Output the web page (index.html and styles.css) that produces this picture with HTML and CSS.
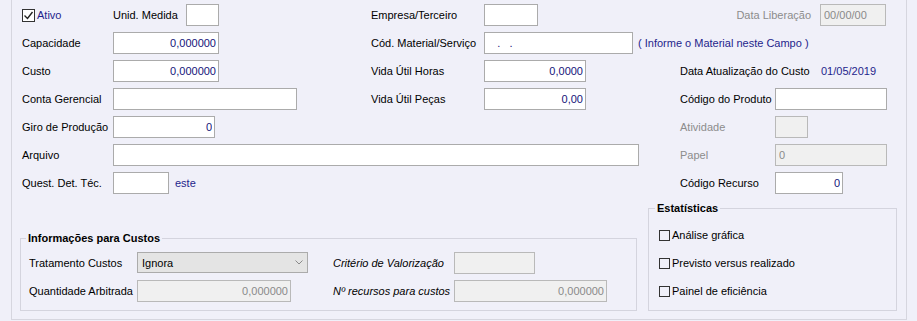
FILE: index.html
```html
<!DOCTYPE html>
<html lang="pt-BR">
<head>
    <meta charset="UTF-8">
    <title>Cadastro de Recurso</title>
    <link rel="stylesheet" href="styles.css">
</head>
<body>
    <div class="panel">
        <div class="form-grid">
            <!-- linha 1 -->
            <label class="check main-check"><span class="box"><svg width="11" height="11" viewBox="0 0 11 11"><polyline points="1.5,5.5 4.5,8.5 9.5,2" fill="none" stroke="#222" stroke-width="1.4"/></svg></span><span class="blue">Ativo</span></label>
            <div class="inline"><span class="lbl-unid">Unid. Medida</span><input class="fld w33" type="text"></div>
            <span>Empresa/Terceiro</span>
            <div><input class="fld w54" type="text"></div>
            <div class="span56 right"><span class="muted">Data Liberação</span><input class="fld w66 off" type="text" value="00/00/00"></div>

            <!-- linha 2 -->
            <span>Capacidade</span>
            <div><input class="fld w106 num" type="text" value="0,000000"></div>
            <span>Cód. Material/Serviço</span>
            <div class="span46 inline"><input class="fld w149 code" type="text" value="   .   ." spellcheck="false"><span class="blue note">( Informe o Material neste Campo )</span></div>

            <!-- linha 3 -->
            <span>Custo</span>
            <div><input class="fld w106 num" type="text" value="0,000000"></div>
            <span>Vida Útil Horas</span>
            <div><input class="fld w102 num" type="text" value="0,0000"></div>
            <div class="span56 inline"><span>Data Atualização do Custo</span><span class="blue date">01/05/2019</span></div>

            <!-- linha 4 -->
            <span>Conta Gerencial</span>
            <div><input class="fld w184" type="text"></div>
            <span>Vida Útil Peças</span>
            <div><input class="fld w102 num" type="text" value="0,00"></div>
            <span>Código do Produto</span>
            <div><input class="fld w112" type="text"></div>

            <!-- linha 5 -->
            <span>Giro de Produção</span>
            <div><input class="fld w102 num" type="text" value="0"></div>
            <span class="muted col5">Atividade</span>
            <div><input class="fld w33 off" type="text"></div>

            <!-- linha 6 -->
            <span>Arquivo</span>
            <div class="span24"><input class="fld w526" type="text"></div>
            <span class="muted">Papel</span>
            <div><input class="fld w112 off" type="text" value="0"></div>

            <!-- linha 7 -->
            <span>Quest. Det. Téc.</span>
            <div class="inline"><input class="fld w56" type="text"><span class="blue este">este</span></div>
            <span class="col5">Código Recurso</span>
            <div><input class="fld w68 num" type="text" value="0"></div>
        </div>

        <div class="bottom">
            <fieldset class="group costs">
                <legend>Informações para Custos</legend>
                <div class="costs-grid">
                    <span>Tratamento Custos</span>
                    <div><div class="combo"><span>Ignora</span><svg width="8" height="5" viewBox="0 0 8 5"><polyline points="0.5,0.5 4,4 7.5,0.5" fill="none" stroke="#8a8a8a" stroke-width="1"/></svg></div></div>
                    <span class="it">Critério de Valorização</span>
                    <div><input class="fld w81 off" type="text"></div>

                    <span>Quantidade Arbitrada</span>
                    <div><input class="fld w154 off num" type="text" value="0,000000"></div>
                    <span class="it">Nº recursos para custos</span>
                    <div><input class="fld w153 off num" type="text" value="0,000000"></div>
                </div>
            </fieldset>

            <fieldset class="group stats">
                <legend>Estatísticas</legend>
                <div class="stats-list">
                    <label class="check"><span class="box small"></span>Análise gráfica</label>
                    <label class="check"><span class="box small"></span>Previsto versus realizado</label>
                    <label class="check"><span class="box small"></span>Painel de eficiência</label>
                </div>
            </fieldset>
        </div>
    </div>
</body>
</html>
```

FILE: styles.css
```css
body {
    margin: 0;
    padding: 0 0 0 11px;
    background-color: #f0f0f9;
    font-family: 'Liberation Sans', Arial, sans-serif;
    font-size: 11px;
    color: #000;
    overflow: hidden;
}

.panel {
    width: 894px;
    border: 1px solid #d6d6df;
    border-top: none;
    padding-bottom: 8px;
}

.form-grid {
    display: grid;
    grid-template-columns: 91px 258px 113px 196px 95px 111px;
    grid-auto-rows: 22px;
    row-gap: 6px;
    align-items: center;
    padding: 4px 0 0 10px;
    white-space: nowrap;
}

.form-grid > * {
    min-width: 0;
}

.inline {
    display: flex;
    align-items: center;
}

.right {
    display: flex;
    align-items: center;
    justify-content: flex-end;
    gap: 9px;
}

.span56 {
    grid-column: 5 / span 2;
}

.span46 {
    grid-column: 4 / span 3;
}

.span24 {
    grid-column: 2 / span 3;
}

.col5 {
    grid-column: 5;
}

.lbl-unid {
    width: 73px;
}

.blue {
    color: #1f1f8c;
}

.muted {
    color: #8c8c8c;
}

.note {
    margin-left: 5px;
}

.date {
    margin-left: auto;
    width: 65px;
    flex-shrink: 0;
}

.este {
    margin-left: 6px;
}

/* campos */
.fld {
    display: block;
    box-sizing: border-box;
    height: 22px;
    margin: 0;
    padding: 0 3px;
    font: inherit;
    color: #14147a;
    background: #fff;
    border: 1px solid #ababab;
    border-radius: 0;
    outline: none;
}

.fld.num {
    text-align: right;
    padding-right: 2px;
}

.fld.code {
    padding-left: 3px;
}

.fld.off {
    background: #f0f0f0;
    border-color: #b9b9b9;
    color: #8a8a8a;
}

.w33 { width: 33px; }
.w54 { width: 54px; }
.w56 { width: 56px; }
.w66 { width: 66px; }
.w68 { width: 68px; }
.w81 { width: 81px; }
.w102 { width: 102px; }
.w106 { width: 106px; }
.w112 { width: 112px; }
.w149 { width: 149px; }
.w153 { width: 153px; }
.w154 { width: 154px; }
.w184 { width: 184px; }
.w526 { width: 526px; }

/* caixas de seleção */
.check {
    display: flex;
    align-items: center;
    gap: 2px;
}

.box {
    box-sizing: border-box;
    display: flex;
    align-items: center;
    justify-content: center;
    width: 13px;
    height: 13px;
    border: 1px solid #333;
    background: #fff;
}

.box.small {
    width: 11px;
    height: 11px;
    background: transparent;
}

/* grupos */
.bottom {
    display: flex;
    align-items: flex-end;
    gap: 11px;
    margin-top: 7px;
    padding-left: 8px;
    white-space: nowrap;
}

.group {
    margin: 0;
    padding: 0;
    border: 1px solid #d4d4de;
    min-width: 0;
}

.group legend {
    margin-left: 5px;
    padding: 0 2px;
    font-weight: bold;
    line-height: 14px;
}

.costs {
    width: 617px;
    box-sizing: border-box;
}

.costs-grid {
    display: grid;
    grid-template-columns: 108px 196px 121px auto;
    grid-auto-rows: 21px;
    row-gap: 7px;
    align-items: center;
    padding: 7px 0 9px 8px;
}

.it {
    font-style: italic;
}

.combo {
    box-sizing: border-box;
    width: 171px;
    height: 21px;
    display: flex;
    align-items: center;
    justify-content: space-between;
    padding: 0 4px;
    background: #e4e4e4;
    border: 1px solid #ababab;
    color: #000;
}

.stats {
    width: 249px;
    box-sizing: border-box;
}

.stats legend {
    margin-left: 6px;
}

.stats-list {
    display: flex;
    flex-direction: column;
    gap: 6px;
    padding: 9px 0 8px 10px;
}

.stats-list .check {
    height: 22px;
}
```
